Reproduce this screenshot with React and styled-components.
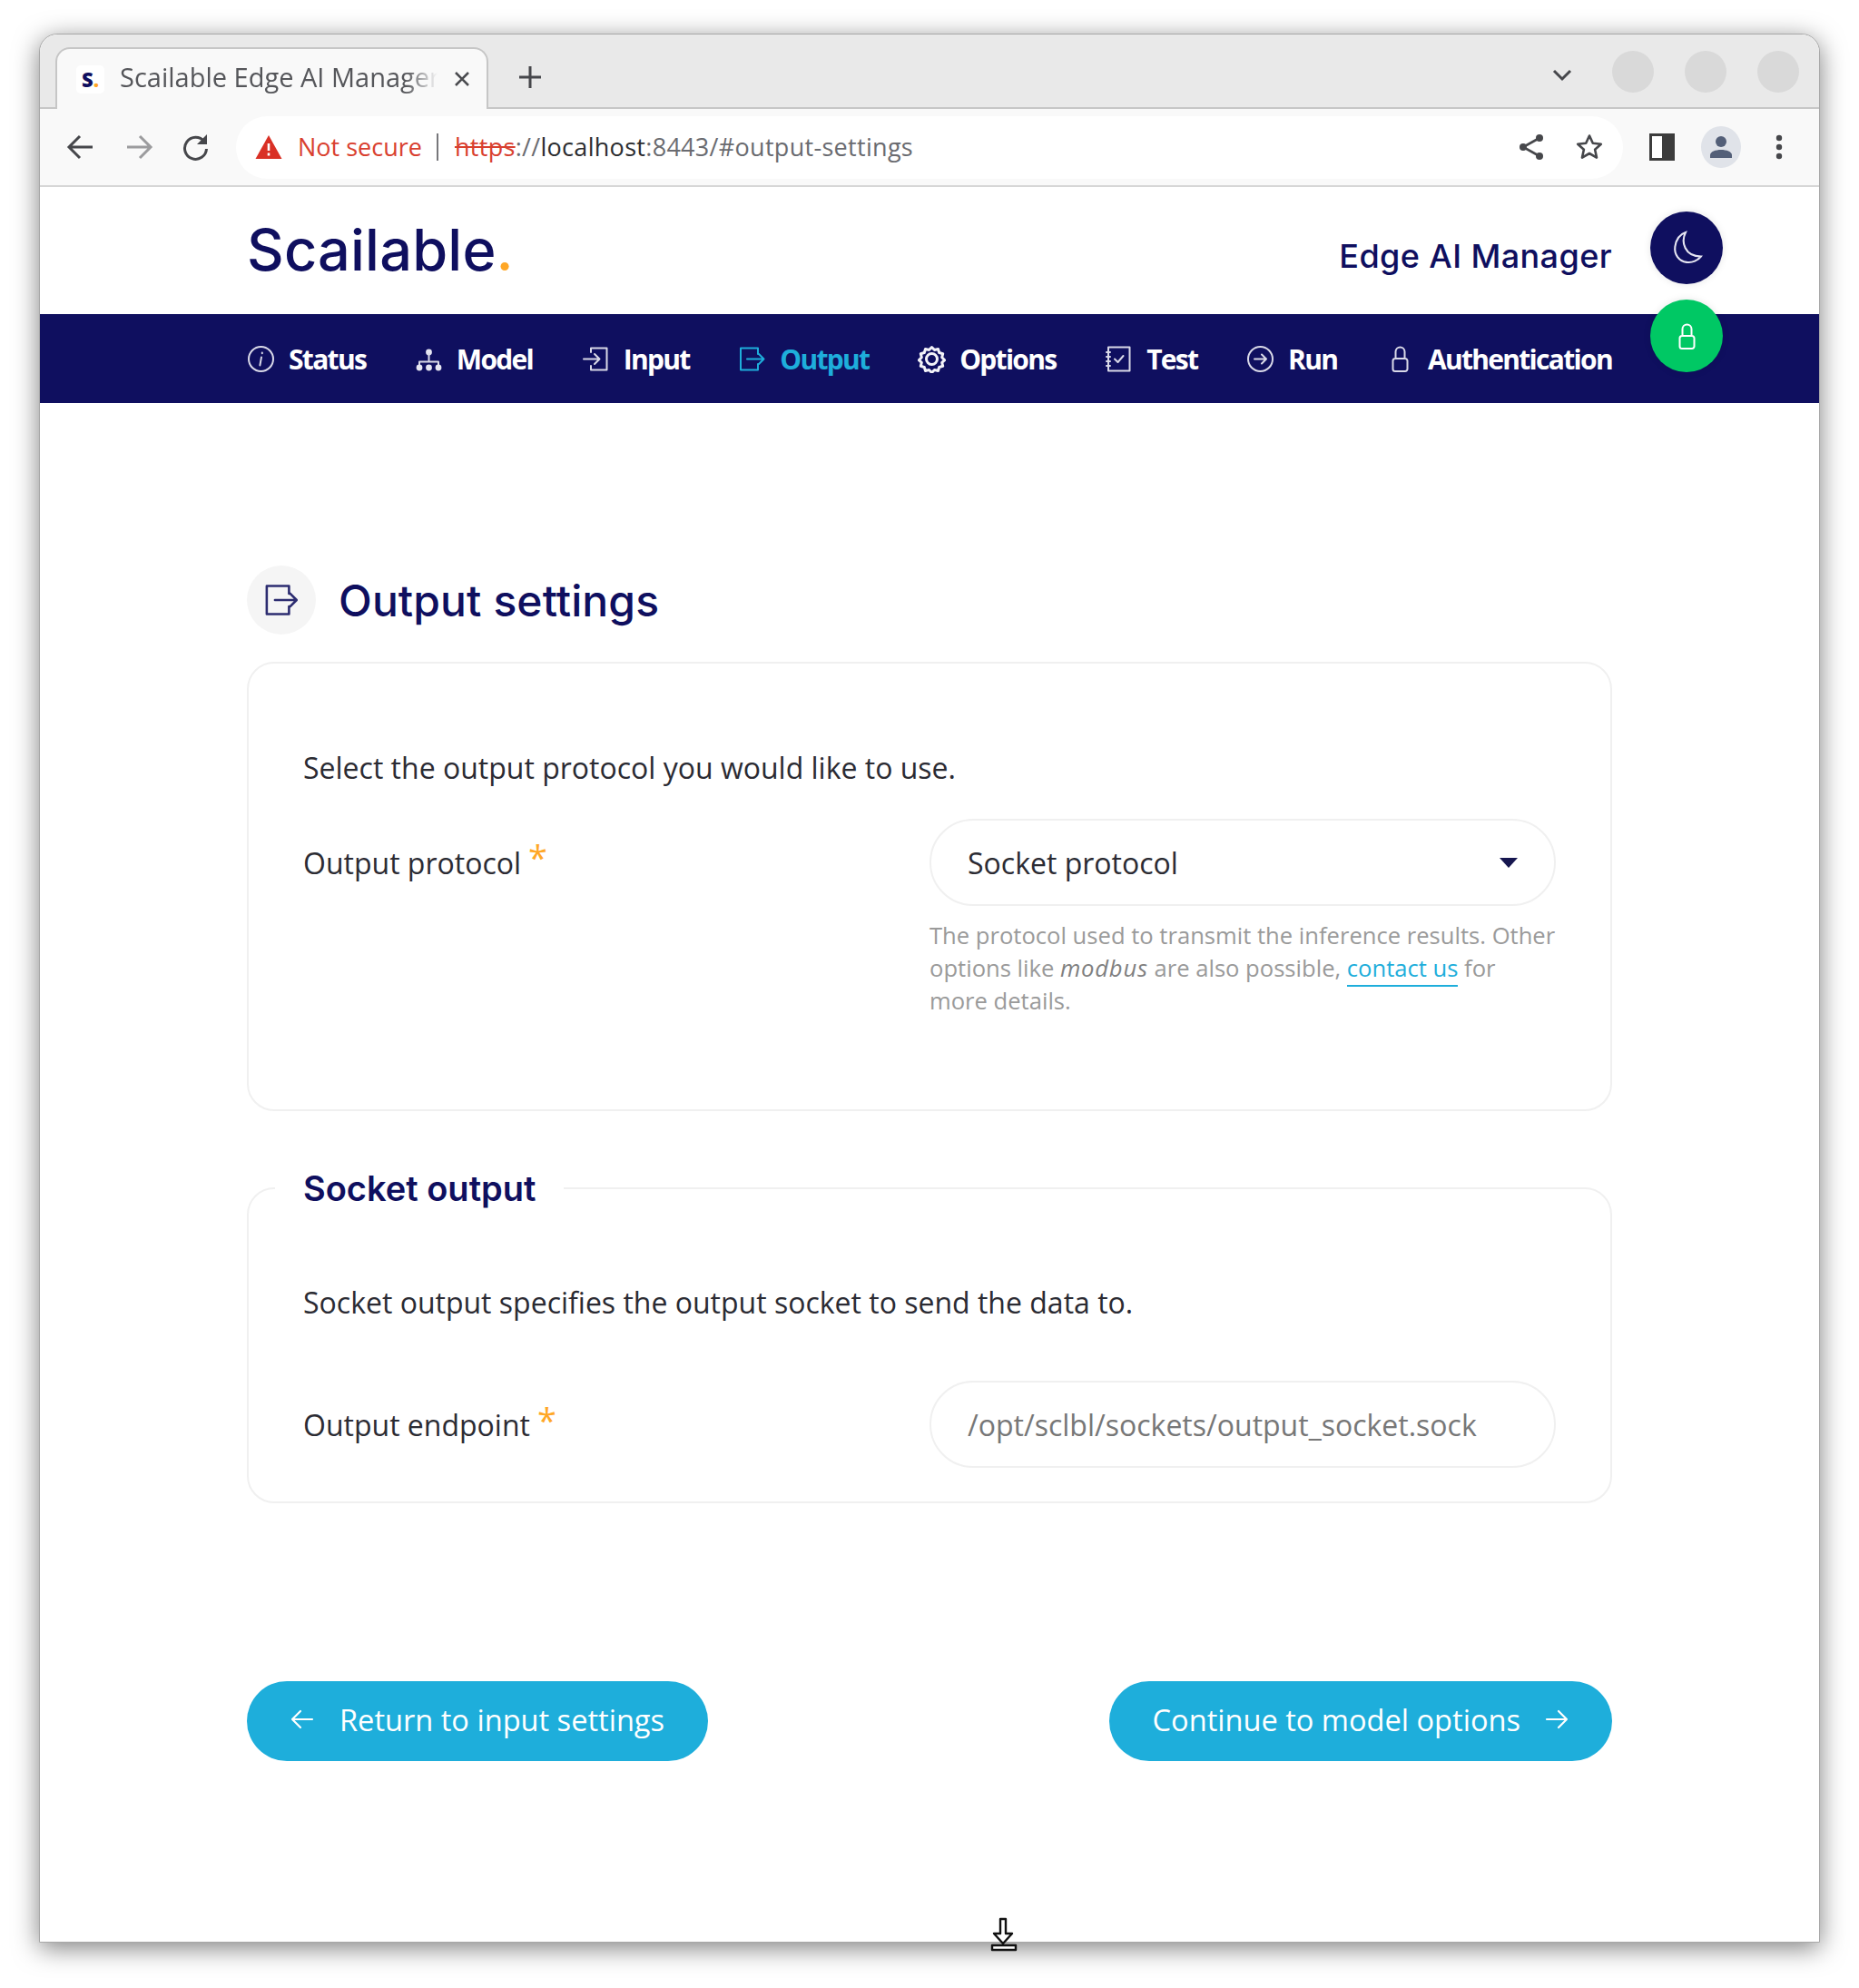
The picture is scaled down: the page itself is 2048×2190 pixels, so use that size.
import styled, { createGlobalStyle } from "styled-components";

const navy = "#0f0f5f";
const blue = "#1eaedb";
const orange = "#ffa726";

const GlobalStyle = createGlobalStyle`
  html, body { margin: 0; padding: 0; background: #fff; }
  body { font-family: "Open Sans", sans-serif; color: #2b2b33; }
  * { box-sizing: border-box; }
`;

const Page = styled.div`
  width: 2048px;
  height: 2190px;
  padding: 37px 43px 0 43px;
  overflow: hidden;
`;

const Window = styled.div`
  position: relative;
  height: 2103px;
  background: #fff;
  border: 1px solid #a8a8a8;
  border-top-left-radius: 20px;
  border-top-right-radius: 20px;
  box-shadow: 0 6px 28px rgba(0, 0, 0, 0.5);
`;

const TabStrip = styled.div`
  height: 82px;
  background: #e9e9e9;
  border-bottom: 2px solid #c6c6c6;
  border-top-left-radius: 20px;
  border-top-right-radius: 20px;
  display: flex;
  align-items: flex-end;
  padding-left: 17px;
  padding-right: 22px;
`;

const Tab = styled.div`
  width: 477px;
  height: 68px;
  margin-bottom: -2px;
  background: #f9f9f9;
  border: 2px solid #c6c6c6;
  border-bottom: 0;
  border-radius: 16px 16px 0 0;
  display: flex;
  align-items: center;
  padding-left: 21px;
  position: relative;
`;

const Favicon = styled.span`
  width: 31px;
  height: 31px;
  background: #fff;
  border-radius: 5px;
  font: 800 22px "Open Sans", sans-serif;
  color: ${navy};
  display: flex;
  align-items: center;
  justify-content: center;
  flex: none;

  i { color: ${orange}; font-style: normal; }
`;

const TabTitle = styled.span`
  width: 350px;
  margin: -5px 0 0 17px;
  font: 400 29px "Open Sans", sans-serif;
  color: #55565a;
  white-space: nowrap;
  overflow: hidden;
  -webkit-mask-image: linear-gradient(90deg, #000 90%, transparent 100%);
  mask-image: linear-gradient(90deg, #000 90%, transparent 100%);
`;

const TabClose = styled.svg`
  width: 18px;
  height: 18px;
  margin-left: 18px;
  flex: none;
`;

const NewTab = styled.svg`
  width: 26px;
  height: 26px;
  margin: 0 0 20px 33px;
`;

const TabTools = styled.div`
  margin-left: auto;
  height: 82px;
  display: flex;
  align-items: center;
  gap: 34px;
  padding-top: 4px;
`;

const Chevron = styled.svg`
  width: 24px;
  height: 16px;
  margin: 7px 9px 0 0;
`;

const WindowDot = styled.span`
  width: 46px;
  height: 46px;
  border-radius: 50%;
  background: #d9d9d9;
`;

const Toolbar = styled.div`
  height: 86px;
  background: #f9f9f9;
  border-bottom: 2px solid #d6d6d6;
  display: flex;
  align-items: center;
  padding: 0 0 0 29px;
`;

const ToolIcon = styled.svg`
  width: 32px;
  height: 32px;
  flex: none;
  margin-right: ${(p) => p.$gap || 0}px;
`;

const Omnibox = styled.div`
  width: 1528px;
  height: 69px;
  background: #fff;
  border-radius: 35px;
  display: flex;
  align-items: center;
  padding-left: 21px;
  margin: 0 29px 0 0;
`;

const NotSecure = styled.span`
  color: #d9402f;
  font-size: 27px;
  margin: -2px 0 0 17px;
`;

const Divider = styled.span`
  width: 2px;
  height: 30px;
  background: #77777b;
  margin: 0 18px 0 16px;
`;

const Url = styled.span`
  font-size: 27px;
  letter-spacing: 0.3px;
  margin-top: -2px;
  color: #6a6b70;
  white-space: nowrap;

  s { color: #d9402f; }
  b { font-weight: 400; color: #2c2d30; }
`;

const OmniTools = styled.div`
  margin-left: auto;
  margin-right: 22px;
  display: flex;
  align-items: center;
  gap: 34px;
`;

const Avatar = styled.span`
  width: 44px;
  height: 46px;
  border-radius: 50%;
  background: #e0e3e9;
  display: flex;
  align-items: center;
  justify-content: center;
  margin: 0 38px 0 29px;
`;

const Header = styled.header`
  height: 140px;
  padding: 0 228px;
  display: flex;
  align-items: center;
  justify-content: space-between;
`;

const Logo = styled.div`
  font: 500 63px Inter, sans-serif;
  color: ${navy};
  letter-spacing: 0.2px;
  margin-top: -2px;

  i { color: ${orange}; font-style: normal; }
`;

const AppName = styled.div`
  font: 500 36px Inter, sans-serif;
  color: ${navy};
  letter-spacing: 0.4px;
  margin-top: 12px;
`;

const NavBar = styled.nav`
  height: 98px;
  background: ${navy};
  padding: 0 228px;
  display: flex;
  align-items: center;
  justify-content: space-between;
`;

const NavItem = styled.a`
  display: flex;
  align-items: center;
  gap: 15px;
  font-size: 30px;
  font-weight: 700;
  letter-spacing: -1.7px;
  color: ${(p) => (p.$active ? blue : "#fff")};
`;

const NavIcon = styled.svg`
  width: 31px;
  height: 31px;
  flex: none;
  fill: none;
  stroke: ${(p) => (p.$active ? blue : "#d9d9e8")};
  stroke-width: 2;
  stroke-linecap: round;
  stroke-linejoin: round;
`;

const FloatButton = styled.button`
  position: absolute;
  right: 106px;
  top: ${(p) => p.$top}px;
  width: 80px;
  height: 80px;
  border: 0;
  border-radius: 50%;
  background: ${(p) => p.$bg};
  box-shadow: 0 0 8px rgba(0, 0, 0, 0.1);
  display: flex;
  align-items: center;
  justify-content: center;
  padding: 0;
`;

const Main = styled.main`
  padding: 179px 228px 0;
`;

const TitleRow = styled.div`
  display: flex;
  align-items: center;
  gap: 25px;
  height: 76px;
  margin-bottom: 30px;
`;

const TitleBadge = styled.span`
  width: 76px;
  height: 76px;
  border-radius: 50%;
  background: #f5f5f5;
  display: flex;
  align-items: center;
  justify-content: center;
`;

const Title = styled.h1`
  margin: 0;
  font: 500 48px Inter, sans-serif;
  color: ${navy};
  letter-spacing: 0.1px;
`;

const Card = styled.section`
  height: 495px;
  border: 2px solid #f0f0f0;
  border-radius: 30px;
  padding: 97px 60px 0;
`;

const SocketCard = styled.fieldset`
  margin: 65px 0 0;
  border: 2px solid #f0f0f0;
  border-radius: 30px;
  padding: 0 60px 37px;
  min-width: 0;
`;

const Legend = styled.legend`
  padding: 0 31px;
  margin-left: -31px;
  font: 600 38px/40px Inter, sans-serif;
  color: ${navy};
`;

const Intro = styled.p`
  margin: ${(p) => p.$top || 0}px 0 ${(p) => p.$bottom}px;
  font-size: 32px;
  line-height: 36px;
  color: #2b2b33;
`;

const FieldRow = styled.div`
  display: grid;
  grid-template-columns: 1fr 1fr;
`;

const FieldLabel = styled.label`
  height: 96px;
  font-size: 32px;
  display: flex;
  align-items: center;
  gap: 8px;
  color: #2b2b33;
`;

const Required = styled.span`
  color: ${orange};
  font-size: 38px;
  line-height: 1;
  align-self: flex-start;
  margin-top: ${(p) => p.$top}px;
`;

const SelectBox = styled.div`
  height: 96px;
  border: 2px solid #f0f0f0;
  border-radius: 48px;
  padding: 0 40px;
  display: flex;
  align-items: center;
  justify-content: space-between;
  font-size: 32px;
  color: #2b2b33;
`;

const Caret = styled.span`
  width: 0;
  height: 0;
  border-left: 10px solid transparent;
  border-right: 10px solid transparent;
  border-top: 11px solid #16164f;
`;

const TextInput = styled.input`
  width: 100%;
  height: 96px;
  border: 2px solid #f0f0f0;
  border-radius: 48px;
  padding: 0 40px;
  font: 400 32px "Open Sans", sans-serif;
  outline: none;

  &::placeholder { color: #777; opacity: 1; }
`;

const Help = styled.p`
  margin: 15px 0 0;
  font-size: 25.6px;
  line-height: 36px;
  color: #9a9a9a;

  em { color: #808080; letter-spacing: 0.8px; }
  a {
    color: ${blue};
    border-bottom: 2px solid ${blue};
    padding-bottom: 1px;
  }
`;

const Actions = styled.div`
  display: flex;
  justify-content: space-between;
  margin-top: 196px;
`;

const ActionButton = styled.button`
  height: 88px;
  padding: 0 48px 4px;
  border: 0;
  border-radius: 44px;
  background: ${blue};
  color: #fff;
  font: 400 32.6px "Open Sans", sans-serif;
  display: flex;
  align-items: center;
  gap: ${(p) => p.$gap}px;
`;

const ButtonArrow = styled.svg`
  width: 26px;
  height: 26px;
  fill: none;
  stroke: #fff;
  stroke-width: 2.2;
  stroke-linecap: round;
  stroke-linejoin: round;
`;

const CursorIcon = styled.svg`
  position: absolute;
  left: 1045px;
  top: 2074px;
  width: 34px;
  height: 38px;
`;

const StatusIcon = () => (
  <NavIcon viewBox="0 0 31 31">
    <circle cx="15.5" cy="15.5" r="13.5" />
    <path d="M16.8 8.6v.6M16 13.4l-1.6 9" />
  </NavIcon>
);

const ModelIcon = () => (
  <NavIcon viewBox="0 0 31 31">
    <circle cx="15.5" cy="8" r="3.4" fill="#e6e6f2" stroke="none" />
    <path d="M15.5 10v7M5 22v-3.5h21V22" />
    <circle cx="5" cy="25" r="3.4" fill="#e6e6f2" stroke="none" />
    <circle cx="15.5" cy="25" r="3.4" fill="#e6e6f2" stroke="none" />
    <circle cx="26" cy="25" r="3.4" fill="#e6e6f2" stroke="none" />
  </NavIcon>
);

const InputIcon = () => (
  <NavIcon viewBox="0 0 31 31">
    <path d="M10 8V3.5h17.5v24H10V23M2 15.5h17M14 10l5.5 5.5L14 21" />
  </NavIcon>
);

const OutputIcon = ({ active, size }) => (
  <NavIcon viewBox="0 0 31 31" $active={active} style={size ? { width: size, height: size, stroke: "#2c2c70" } : undefined}>
    <path d="M22 10V3.5H3v24h19V21M10 15.5h18M23 10l5.5 5.5L23 21" />
  </NavIcon>
);

const OptionsIcon = () => (
  <NavIcon viewBox="0 0 31 31" style={{ strokeWidth: 3, stroke: "#f2f2f8" }}>
    <path d="M15.5 2.5l3 3 4-1 1.2 4 4 1.2-1 4 3 3-3 2.6 1 4-4 1.2-1.2 4-4-1-3 3-3-3-4 1-1.2-4-4-1.2 1-4-3-2.6 3-3-1-4 4-1.2 1.2-4 4 1z" />
    <circle cx="15.5" cy="15.5" r="6" />
  </NavIcon>
);

const TestIcon = () => (
  <NavIcon viewBox="0 0 31 31">
    <path d="M4 2.5h23.5v26H4zM2 8h4M2 13h4M2 18h4M2 23h4M11 15.5l3.5 3.5 6-7" />
  </NavIcon>
);

const RunIcon = () => (
  <NavIcon viewBox="0 0 31 31">
    <circle cx="15.5" cy="15.5" r="13.5" />
    <path d="M9 15.5h13M17 10.5l5 5-5 5" />
  </NavIcon>
);

const LockIcon = ({ stroke = "#d9d9e8" }) => (
  <NavIcon viewBox="0 0 31 31" style={{ stroke }}>
    <path d="M10.5 15V7.5a5 5 0 0 1 10 0V15M10 15h11a2.5 2.5 0 0 1 2.5 2.5v9a2.5 2.5 0 0 1-2.5 2.5H10a2.5 2.5 0 0 1-2.5-2.5v-9A2.5 2.5 0 0 1 10 15z" />
  </NavIcon>
);

const navItems = [
  ["Status", <StatusIcon key="s" />],
  ["Model", <ModelIcon key="m" />],
  ["Input", <InputIcon key="i" />],
  ["Output", <OutputIcon key="o" active />, true],
  ["Options", <OptionsIcon key="op" />],
  ["Test", <TestIcon key="t" />],
  ["Run", <RunIcon key="r" />],
  ["Authentication", <LockIcon key="a" />],
];

export default function App() {
  return (
    <Page>
      <GlobalStyle />
      <Window>
        <TabStrip>
          <Tab>
            <Favicon>
              S<i>.</i>
            </Favicon>
            <TabTitle>Scailable Edge AI Manager</TabTitle>
            <TabClose viewBox="0 0 18 18">
              <path d="M2 2l14 14M16 2L2 16" stroke="#4a4b4f" strokeWidth="2.6" />
            </TabClose>
          </Tab>
          <NewTab viewBox="0 0 26 26">
            <path d="M13 1v24M1 13h24" stroke="#46474b" strokeWidth="3" />
          </NewTab>
          <TabTools>
            <Chevron viewBox="0 0 24 16">
              <path d="M3 3l9 9 9-9" fill="none" stroke="#46474b" strokeWidth="3" />
            </Chevron>
            <WindowDot />
            <WindowDot />
            <WindowDot />
          </TabTools>
        </TabStrip>
        <Toolbar>
          <ToolIcon viewBox="0 0 32 32" $gap={32}>
            <path d="M29 16H4M15 4L3 16l12 12" fill="none" stroke="#46474b" strokeWidth="3" />
          </ToolIcon>
          <ToolIcon viewBox="0 0 32 32" $gap={30}>
            <path d="M3 16h25M17 4l12 12-12 12" fill="none" stroke="#9c9c9e" strokeWidth="3" />
          </ToolIcon>
          <ToolIcon viewBox="0 0 32 32" $gap={29}>
            <path d="M26 10a12 12 0 1 0 2.5 8" fill="none" stroke="#46474b" strokeWidth="3" />
            <path d="M29 2v11H18z" fill="#46474b" />
          </ToolIcon>
          <Omnibox>
            <svg width="30" height="28" viewBox="0 0 30 28">
              <path d="M15 1l14.5 26H.5z" fill="#d93025" />
              <path d="M15 10v8M15 20.5v3" stroke="#fff" strokeWidth="2.6" />
            </svg>
            <NotSecure>Not secure</NotSecure>
            <Divider />
            <Url>
              <s>https</s>://<b>localhost</b>:8443/#output-settings
            </Url>
            <OmniTools>
              <svg width="30" height="32" viewBox="0 0 30 32">
                <path d="M24 6L6 16l18 10" fill="none" stroke="#46474b" strokeWidth="2.6" />
                <circle cx="24" cy="6" r="4" fill="#46474b" />
                <circle cx="6" cy="16" r="4" fill="#46474b" />
                <circle cx="24" cy="26" r="4" fill="#46474b" />
              </svg>
              <svg width="30" height="30" viewBox="0 0 30 30">
                <path d="M15 2.5l3.8 8.2 9 1-6.7 6 1.9 8.9-8-4.6-8 4.6 1.9-8.9-6.7-6 9-1z" fill="none" stroke="#46474b" strokeWidth="2.6" strokeLinejoin="round" />
              </svg>
            </OmniTools>
          </Omnibox>
          <svg width="28" height="30" viewBox="0 0 28 30">
            <rect x="1.5" y="1.5" width="25" height="27" fill="#fff" stroke="#3c3c3c" strokeWidth="3" />
            <rect x="14" y="1.5" width="13" height="27" fill="#3c3c3c" />
          </svg>
          <Avatar>
            <svg width="26" height="26" viewBox="0 0 26 26">
              <circle cx="13" cy="7" r="6" fill="#535f78" />
              <path d="M1 25v-3c0-4 6-6 12-6s12 2 12 6v3z" fill="#535f78" />
            </svg>
          </Avatar>
          <svg width="8" height="28" viewBox="0 0 8 28">
            <circle cx="4" cy="4" r="3.2" fill="#46474b" />
            <circle cx="4" cy="14" r="3.2" fill="#46474b" />
            <circle cx="4" cy="24" r="3.2" fill="#46474b" />
          </svg>
        </Toolbar>

        <Header>
          <Logo>
            Scailable<i>.</i>
          </Logo>
          <AppName>Edge AI Manager</AppName>
        </Header>
        <NavBar>
          {navItems.map(([label, icon, active]) => (
            <NavItem key={label} $active={active}>
              {icon}
              {label}
            </NavItem>
          ))}
        </NavBar>

        <FloatButton $top={195} $bg={navy}>
          <svg width="38" height="38" viewBox="0 0 36 36">
            <path d="M17 2c-5 10-1 25 16 25-3 4-9 7-15 6C10 32 5 25 6 17 7 10 11 4 17 2z" fill="none" stroke="#e6e6f2" strokeWidth="2" />
          </svg>
        </FloatButton>
        <FloatButton $top={292} $bg="#00c864">
          <LockIcon stroke="#fff" />
        </FloatButton>

        <Main>
          <TitleRow>
            <TitleBadge>
              <OutputIcon size={40} />
            </TitleBadge>
            <Title>Output settings</Title>
          </TitleRow>

          <Card>
            <Intro $bottom={38}>Select the output protocol you would like to use.</Intro>
            <FieldRow>
              <FieldLabel>
                Output protocol <Required $top={23}>*</Required>
              </FieldLabel>
              <div>
                <SelectBox>
                  Socket protocol
                  <Caret />
                </SelectBox>
                <Help>
                  The protocol used to transmit the inference results. Other options like <em>modbus</em> are also
                  possible, <a>contact us</a> for more details.
                </Help>
              </div>
            </FieldRow>
          </Card>

          <SocketCard>
            <Legend>Socket output</Legend>
            <Intro $top={88} $bottom={68}>
              Socket output specifies the output socket to send the data to.
            </Intro>
            <FieldRow>
              <FieldLabel>
                Output endpoint <Required $top={24}>*</Required>
              </FieldLabel>
              <TextInput placeholder="/opt/sclbl/sockets/output_socket.sock" />
            </FieldRow>
          </SocketCard>

          <Actions>
            <ActionButton $gap={28}>
              <ButtonArrow viewBox="0 0 26 26">
                <path d="M24 13H2M11 4l-9 9 9 9" />
              </ButtonArrow>
              Return to input settings
            </ActionButton>
            <ActionButton $gap={27}>
              Continue to model options
              <ButtonArrow viewBox="0 0 26 26">
                <path d="M2 13h22M15 4l9 9-9 9" />
              </ButtonArrow>
            </ActionButton>
          </Actions>
        </Main>

        <CursorIcon viewBox="0 0 34 38">
          <path d="M13 2h6v16h7l-10 11L6 18h7zM4 31h26v5H4z" fill="#fff" stroke="#111" strokeWidth="2.4" strokeLinejoin="round" />
        </CursorIcon>
      </Window>
    </Page>
  );
}
